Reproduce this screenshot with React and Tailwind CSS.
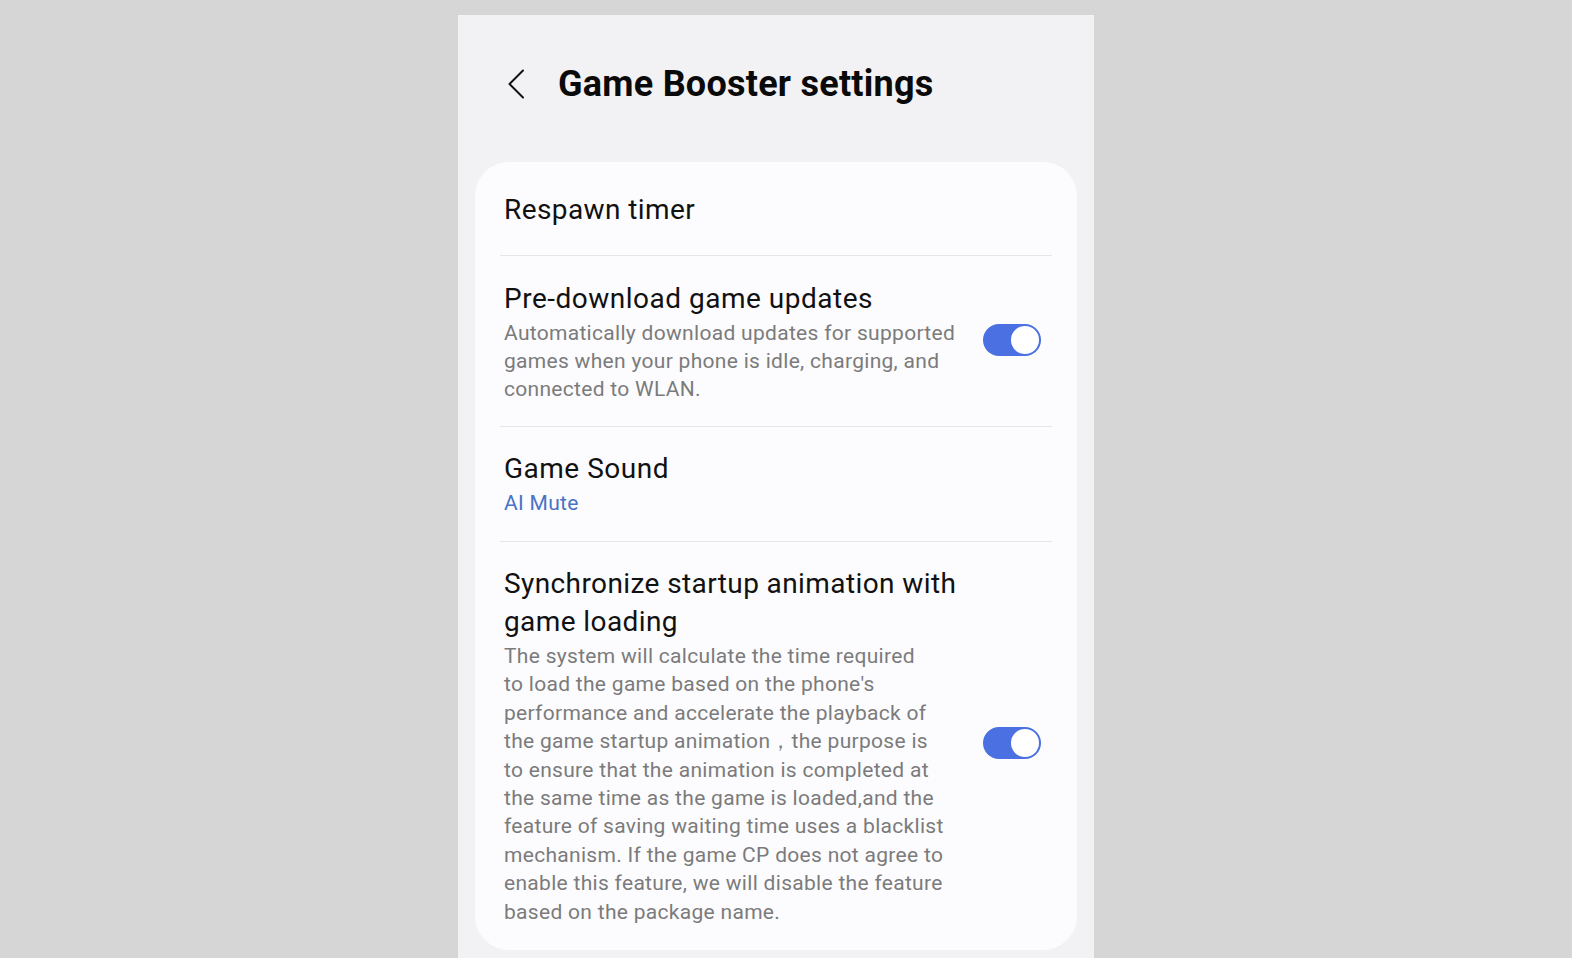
export default function App() {
  const syncDesc = [
    'The system will calculate the time required',
    "to load the game based on the phone's",
    'performance and accelerate the playback of',
    'the game startup animation，the purpose is',
    'to ensure that the animation is completed at',
    'the same time as the game is loaded,and the',
    'feature of saving waiting time uses a blacklist',
    'mechanism. If the game CP does not agree to',
    'enable this feature, we will disable the feature',
    'based on the package name.',
  ];

  const Toggle = () => (
    <div className="w-[58px] h-[32px] shrink-0 mb-[5px] rounded-full bg-[#4a70e2] flex items-center justify-end p-[2px]">
      <div className="w-[28px] h-[28px] rounded-full bg-white" />
    </div>
  );

  return (
    <div className="min-h-screen h-[958px] bg-[#d6d6d6] pl-[458px] pt-[15px] overflow-hidden" style={{ fontFamily: 'Roboto, "Noto Sans", sans-serif' }}>
      <div className="w-[636px] h-[943px] bg-[#f2f2f4] overflow-hidden">
        {/* Header */}
        <div className="h-[136px] flex items-center pl-[49px] pt-[2px]">
          <svg width="18" height="30" viewBox="0 0 18 30" fill="none" className="shrink-0">
            <path d="M16 1.5 L2.5 15 L16 28.5" stroke="#111" strokeWidth="2" strokeLinecap="round" strokeLinejoin="round" />
          </svg>
          <h1 className="ml-[33px] text-[36px] leading-[40px] font-bold text-[#0a0a0a] tracking-[0.25px]">Game Booster settings</h1>
        </div>

        {/* Card */}
        <div className="mt-[11px] mx-[17px] bg-[#fcfcfe] rounded-[34px] px-[25px]">
          <div className="h-[94px] flex items-center pl-[4px] pt-[2px] border-b border-[#e6e6e8]">
            <p className="text-[28px] text-[#111] tracking-[0.4px]">Respawn timer</p>
          </div>

          <div className="pt-[25px] pb-[23px] pl-[4px] pr-[11px] flex items-center justify-between border-b border-[#e6e6e8]">
            <div>
              <p className="text-[28px] leading-[36px] text-[#111] tracking-[0.5px]">Pre-download game updates</p>
              <p className="mt-[2px] text-[21px] leading-[28px] text-[#7b7b7b] tracking-[0.3px]">
                Automatically download updates for supported<br />
                games when your phone is idle, charging, and<br />
                connected to WLAN.
              </p>
            </div>
            <Toggle />
          </div>

          <div className="pt-[24px] pb-[24px] pl-[4px] border-b border-[#e6e6e8]">
            <p className="text-[28px] leading-[36px] text-[#111] tracking-[0.5px]">Game Sound</p>
            <p className="mt-[2px] text-[21px] leading-[28px] text-[#4a72c6] tracking-[0.3px]">AI Mute</p>
          </div>

          <div className="pt-[23px] pb-[24px] pl-[4px] pr-[11px] flex items-center justify-between">
            <div>
              <p className="text-[28px] leading-[38px] text-[#111] tracking-[0.4px]">
                Synchronize startup animation with<br />game loading
              </p>
              <div className="mt-[1px] text-[21px] leading-[28.4px] text-[#7b7b7b] tracking-[0.3px]">
                {syncDesc.map((line, i) => (
                  <p key={i} className="whitespace-nowrap">{line}</p>
                ))}
              </div>
            </div>
            <Toggle />
          </div>
        </div>
      </div>
    </div>
  );
}
